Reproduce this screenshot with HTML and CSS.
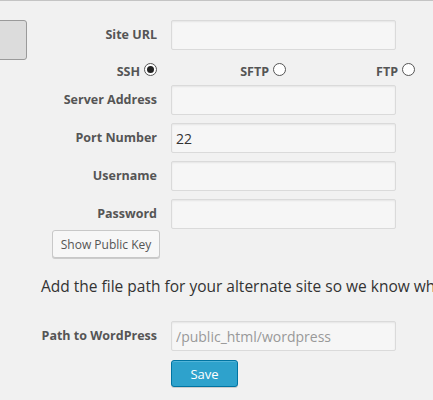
FILE: index.html
```html
<!DOCTYPE html>
<html>
<head>
<meta charset="utf-8">
<link rel="stylesheet" href="styles.css">
</head>
<body>
<div class="page">
  <div class="stub-col"><div class="stub"></div></div>
  <div class="main">
    <div class="grid">
      <label class="lbl">Site URL</label>
      <input class="field" type="text">

      <div class="radios">
        <label class="radio-cell">SSH <span class="radio on"></span></label>
        <label class="radio-cell">SFTP <span class="radio"></span></label>
        <label class="radio-cell">FTP <span class="radio"></span></label>
      </div>

      <label class="lbl">Server Address</label>
      <input class="field" type="text">
      <label class="lbl">Port Number</label>
      <input class="field" type="text" value="22">
      <label class="lbl">Username</label>
      <input class="field" type="text">
      <label class="lbl">Password</label>
      <input class="field" type="password">
    </div>
    <div class="keyrow"><button class="btn">Show Public Key</button></div>
    <p class="intro">Add the file path for your alternate site so we know where to find it</p>
    <div class="grid path-grid">
      <label class="lbl">Path to WordPress</label>
      <input class="field" type="text" placeholder="/public_html/wordpress">
      <span></span>
      <div><button class="btn primary">Save</button></div>
    </div>
  </div>
</div>
</body>
</html>
```

FILE: styles.css
```css
html, body {
  margin: 0;
  padding: 0;
  background: #f1f1f1;
  overflow: hidden;
}
body {
  border-top: 1px solid #c4c4c4;
  font-family: "Open Sans", "Liberation Sans", sans-serif;
  color: #333;
  height: 399px;
}
.page {
  display: flex;
  padding-top: 19px;
}
.stub-col {
  width: 27px;
  flex: none;
}
.stub {
  margin-left: -6px;
  width: 31px;
  height: 38px;
  background: #dcdcdc;
  border: 1px solid #9a9a9a;
  border-radius: 3px;
}
.main {
  margin-left: 2px;
  width: 404px;
  flex: none;
}
.grid {
  display: grid;
  grid-template-columns: 129px 225px;
  column-gap: 13px;
  row-gap: 8px;
  align-items: center;
}
.lbl {
  text-align: right;
  font-weight: 700;
  font-size: 12.5px;
  color: #555;
  padding-right: 1px;
  margin-top: -1px;
}
.field {
  box-sizing: border-box;
  height: 30px;
  width: 225px;
  margin: 0;
  padding: 3px 4px;
  border: 1px solid #dadada;
  border-radius: 2px;
  background: #f6f6f6;
  box-shadow: inset 0 1px 2px rgba(0,0,0,.07);
  font-family: "Open Sans", "Liberation Sans", sans-serif;
  font-size: 14px;
  color: #333;
  outline: none;
}
.field::placeholder {
  color: #999;
}
.radios {
  grid-column: 1 / -1;
  display: grid;
  grid-template-columns: repeat(3, 129px);
  height: 35px;
  box-sizing: border-box;
  padding-top: 8px;
  margin: -8px 0;
  align-items: center;
}
.radio-cell {
  display: flex;
  justify-content: flex-end;
  align-items: center;
  gap: 4px;
  font-weight: 700;
  font-size: 12.5px;
  color: #555;
  padding-right: 1px;
}
.radio {
  box-sizing: border-box;
  width: 13px;
  height: 13px;
  border: 1px solid #555;
  border-radius: 50%;
  background: #fff;
  margin-top: -4px;
  position: relative;
}
.radio.on::after {
  content: "";
  position: absolute;
  left: 2px;
  top: 2px;
  width: 7px;
  height: 7px;
  border-radius: 50%;
  background: #222;
}
.keyrow {
  padding: 1px 0 0 23px;
}
.btn {
  box-sizing: border-box;
  width: 108px;
  height: 28px;
  margin: 0;
  padding: 0;
  border: 1px solid #c8c8c8;
  border-radius: 3px;
  background: #f7f7f7;
  box-shadow: 0 1px 0 #ccc;
  font-family: "Open Sans", "Liberation Sans", sans-serif;
  font-size: 12px;
  color: #555;
}
.btn.primary {
  width: 67px;
  height: 27px;
  font-size: 13px;
  background: #2ea2cc;
  border-color: #0074a2;
  color: #fff;
  box-shadow: inset 0 1px 0 rgba(120,200,230,.5), 0 1px 0 rgba(0,0,0,.15);
}
.intro {
  margin: 17px 0 0 12px;
  font-size: 15.5px;
  line-height: 22px;
  color: #333;
  white-space: nowrap;
}
.path-grid {
  margin-top: 24px;
  row-gap: 9px;
}
```
